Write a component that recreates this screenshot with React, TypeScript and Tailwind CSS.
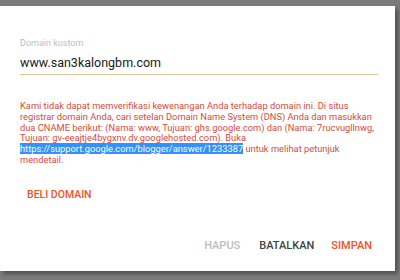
import React from "react";

const font = { fontFamily: "Roboto, 'Liberation Sans', sans-serif" };

export default function App() {
  return (
    <div
      className="h-[280px] w-[400px] overflow-hidden bg-[#7b7b7b] pt-[6px]"
      style={font}
    >
      <div className="flex h-[265px] w-[395px] flex-col bg-white shadow-[3px_3px_4px_rgba(0,0,0,0.35)]">
        <div className="pl-5 pr-[17px] pt-[31px]">
          <label className="block text-[9px] leading-[12px] text-[#bdbdbd]">
            Domain kustom
          </label>
          <div className="mt-[6px] border-b border-[#e6c79c] pb-[3px] text-[12.5px] leading-[16px] text-[#212121]">
            www.san3kalongbm.com
          </div>

          <p className="-mr-[5px] mt-[26px] text-[9.3px] leading-[10.8px] text-[#d84a3a]">
            Kami tidak dapat memverifikasi kewenangan Anda terhadap domain ini. Di situs
            registrar domain Anda, cari setelan Domain Name System (DNS) Anda dan masukkan
            dua CNAME berikut: (Nama: www, Tujuan: ghs.google.com) dan (Nama: 7rucvugllnwg,
            Tujuan: gv-eeajtje4bygxnv.dv.googlehosted.com). Buka{" "}
            <span className="bg-[#3390ff] text-white">
              https://support.google.com/blogger/answer/1233387
            </span>{" "}
            untuk melihat petunjuk mendetail.
          </p>

          <button
            type="button"
            className="ml-[7px] mt-[23px] text-[10.5px] font-medium leading-[12px] text-[#f4511e]"
          >
            BELI DOMAIN
          </button>
        </div>

        <div className="mt-auto flex items-center justify-end pb-[19px] pr-[23px] text-[11px] font-medium leading-[12px]">
          <button type="button" className="text-[#bdbdbd]">
            HAPUS
          </button>
          <button type="button" className="ml-[19px] text-[#424242]">
            BATALKAN
          </button>
          <button type="button" className="ml-[17px] text-[#f4511e]">
            SIMPAN
          </button>
        </div>
      </div>
    </div>
  );
}
